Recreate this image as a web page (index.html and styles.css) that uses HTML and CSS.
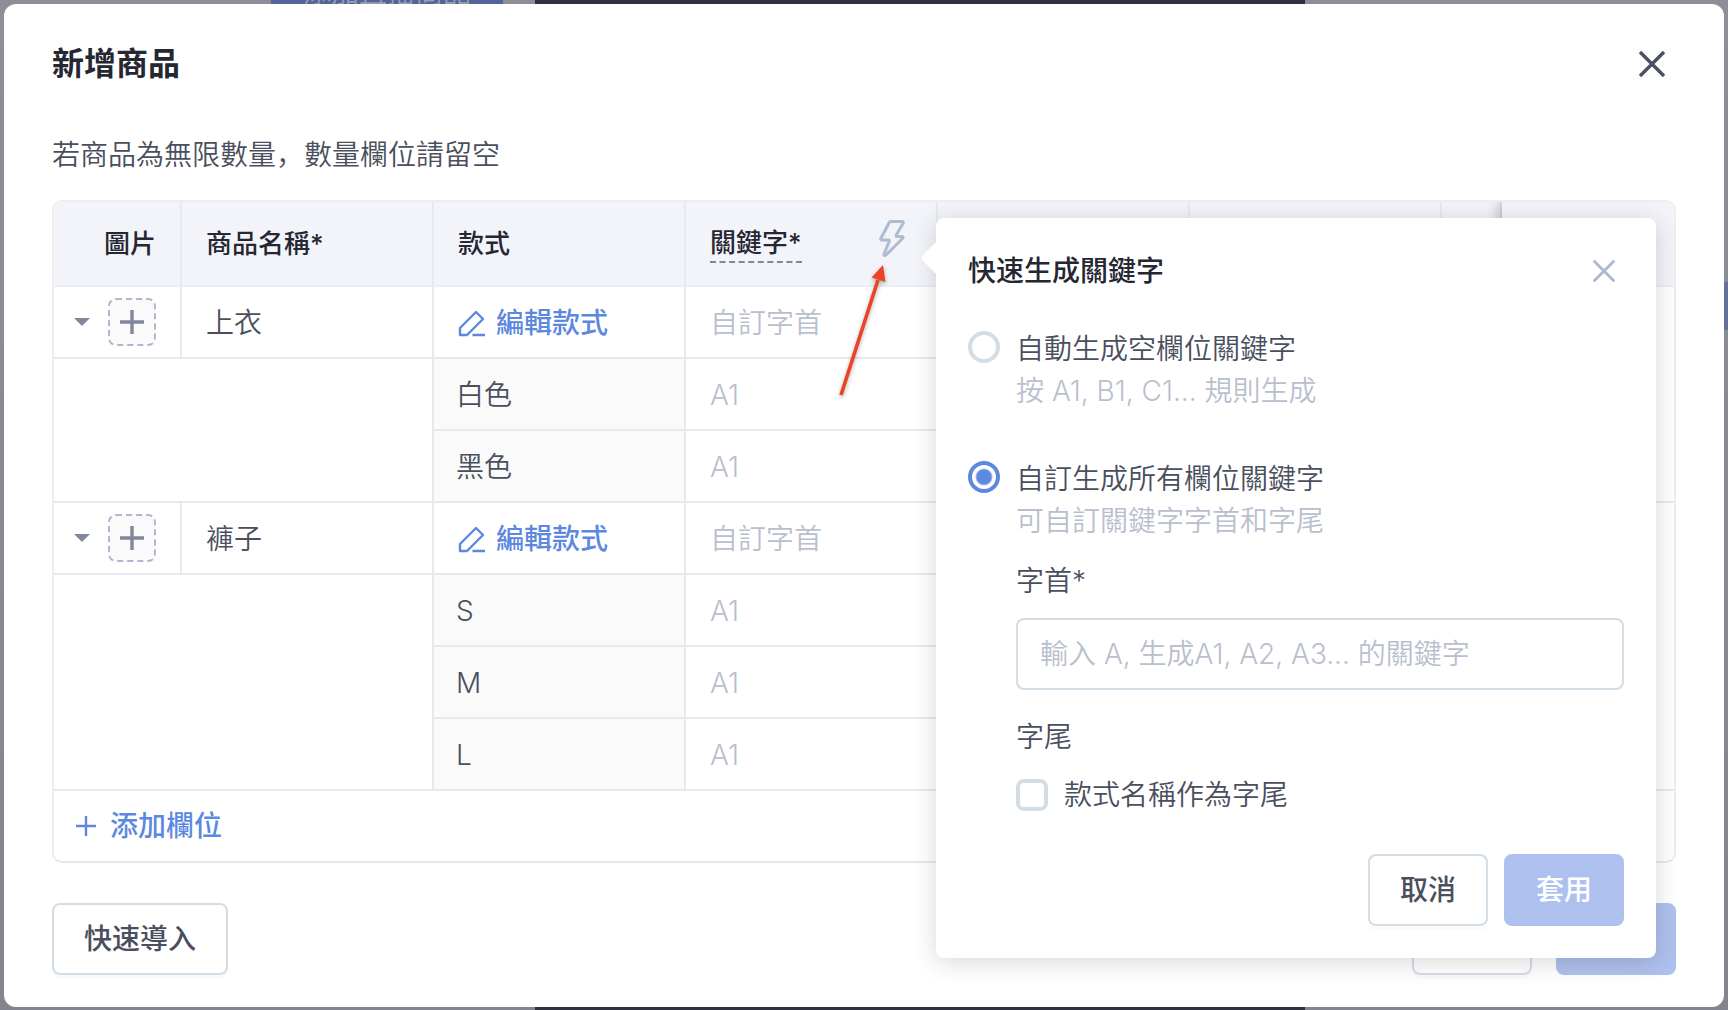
FILE: index.html
```html
<!DOCTYPE html>
<html lang="zh-CN">
<head>
    <meta charset="UTF-8">
    <meta name="viewport" content="width=device-width, initial-scale=1.0">
    <title>新增商品</title>
    <link rel="stylesheet" href="styles.css">
</head>
<body>
    <div class="page-strip"></div>
    <div class="page-button">添加直播商品</div>
    <div class="page-tag"></div>

    <div class="modal" role="dialog" aria-labelledby="modalTitle">
        <header class="modal-header">
            <h1 id="modalTitle">新增商品</h1>
            <button class="icon-button" type="button" aria-label="關閉">
                <svg width="28" height="28" viewBox="0 0 28 28"><path d="M2 2l24 24M26 2L2 26" stroke="#4b5062" stroke-width="3.4" fill="none"/></svg>
            </button>
        </header>
        <p class="note">若商品為無限數量，數量欄位請留空</p>

        <div class="table-box">
            <table>
                <colgroup>
                    <col class="col-image">
                    <col class="col-data">
                    <col class="col-data">
                    <col class="col-data">
                    <col class="col-data">
                    <col class="col-data">
                    <col>
                    <col class="col-action">
                </colgroup>
                <thead>
                    <tr>
                        <th class="image-head">圖片</th>
                        <th>商品名稱*</th>
                        <th>款式</th>
                        <th>
                            <div class="keyword-head">
                                <span class="hint-label">關鍵字*</span>
                                <button class="icon-button bolt" type="button" aria-label="快速生成關鍵字">
                                    <svg width="28" height="40" viewBox="0 0 28 40"><path d="M12.500 3.500H24Q26 3.500 25 5.500L18.500 16.500Q17.500 18.500 19 18.500H24Q26 18.500 24.500 20.500L8 37Q5.500 38.500 6 36L11 24Q12 22 10 22H4Q2 22 3 20L11 5Q11.500 3.500 12.500 3.500Z" stroke="#aebbd0" stroke-width="3" stroke-linejoin="round" fill="none"/></svg>
                                </button>
                            </div>
                        </th>
                        <th></th>
                        <th></th>
                        <th></th>
                        <th class="action"></th>
                    </tr>
                </thead>
                <tbody>
                    <tr>
                        <td class="image-cell">
                            <div class="image-tools">
                                <button class="caret" type="button" aria-label="收合"></button>
                                <button class="upload" type="button" aria-label="上傳圖片">
                                    <svg width="24" height="24" viewBox="0 0 24 24"><path d="M12 0v24M0 12h24" stroke="#80879c" stroke-width="3.400"/></svg>
                                </button>
                            </div>
                        </td>
                        <td class="text">上衣</td>
                        <td class="text"><a class="edit" href="#"><svg width="28" height="28" viewBox="0 0 28 28"><path d="M18 3l7 7L9 26H2v-7zM14.500 26H27" stroke="#5c88e0" stroke-width="2.400" stroke-linejoin="round" fill="none"/></svg>編輯款式</a></td>
                        <td class="text"><input class="cell-input" type="text" placeholder="自訂字首" aria-label="自訂字首"></td>
                        <td></td>
                        <td></td>
                        <td></td>
                        <td class="action" rowspan="3"></td>
                    </tr>
                    <tr>
                        <td colspan="2" rowspan="2"></td>
                        <td class="text variant">白色</td>
                        <td class="text"><input class="cell-input" type="text" placeholder="A1" aria-label="白色關鍵字"></td>
                        <td></td>
                        <td></td>
                        <td></td>
                    </tr>
                    <tr>
                        <td class="text variant">黑色</td>
                        <td class="text"><input class="cell-input" type="text" placeholder="A1" aria-label="黑色關鍵字"></td>
                        <td></td>
                        <td></td>
                        <td></td>
                    </tr>
                    <tr>
                        <td class="image-cell">
                            <div class="image-tools">
                                <button class="caret" type="button" aria-label="收合"></button>
                                <button class="upload" type="button" aria-label="上傳圖片">
                                    <svg width="24" height="24" viewBox="0 0 24 24"><path d="M12 0v24M0 12h24" stroke="#80879c" stroke-width="3.400"/></svg>
                                </button>
                            </div>
                        </td>
                        <td class="text">褲子</td>
                        <td class="text"><a class="edit" href="#"><svg width="28" height="28" viewBox="0 0 28 28"><path d="M18 3l7 7L9 26H2v-7zM14.500 26H27" stroke="#5c88e0" stroke-width="2.400" stroke-linejoin="round" fill="none"/></svg>編輯款式</a></td>
                        <td class="text"><input class="cell-input" type="text" placeholder="自訂字首" aria-label="自訂字首"></td>
                        <td></td>
                        <td></td>
                        <td></td>
                        <td class="action" rowspan="4"></td>
                    </tr>
                    <tr>
                        <td colspan="2" rowspan="3"></td>
                        <td class="text variant">S</td>
                        <td class="text"><input class="cell-input" type="text" placeholder="A1" aria-label="S 關鍵字"></td>
                        <td></td>
                        <td></td>
                        <td></td>
                    </tr>
                    <tr>
                        <td class="text variant">M</td>
                        <td class="text"><input class="cell-input" type="text" placeholder="A1" aria-label="M 關鍵字"></td>
                        <td></td>
                        <td></td>
                        <td></td>
                    </tr>
                    <tr>
                        <td class="text variant">L</td>
                        <td class="text"><input class="cell-input" type="text" placeholder="A1" aria-label="L 關鍵字"></td>
                        <td></td>
                        <td></td>
                        <td></td>
                    </tr>
                </tbody>
            </table>
            <div class="table-footer">
                <button class="add-row" type="button">
                    <svg width="20" height="20" viewBox="0 0 20 20"><path d="M10 0v20M0 10h20" stroke="#5c88e0" stroke-width="2.400"/></svg>
                    添加欄位
                </button>
            </div>
        </div>

        <footer class="modal-footer">
            <button class="button" type="button">快速導入</button>
            <div class="footer-actions">
                <button class="button" type="button" aria-label="取消"></button>
                <button class="button primary" type="button" aria-label="確認"></button>
            </div>
        </footer>

        <form class="popover">
            <div class="popover-header">
                <h2>快速生成關鍵字</h2>
                <button class="icon-button" type="button" aria-label="關閉">
                    <svg width="24" height="24" viewBox="0 0 24 24"><path d="M2.500 2.500l19 19M21.500 2.500l-19 19" stroke="#abb8cd" stroke-width="2.800" stroke-linecap="round" fill="none"/></svg>
                </button>
            </div>

            <label class="option">
                <input type="radio" name="mode">
                <span>自動生成空欄位關鍵字<small>按 A1, B1, C1... 規則生成</small></span>
            </label>
            <label class="option">
                <input type="radio" name="mode" checked>
                <span>自訂生成所有欄位關鍵字<small>可自訂關鍵字字首和字尾</small></span>
            </label>

            <div class="fields">
                <label for="prefix">字首*</label>
                <input type="text" id="prefix" placeholder="輸入 A, 生成A1, A2, A3... 的關鍵字">
                <div class="suffix-title">字尾</div>
                <label class="check"><input type="checkbox">款式名稱作為字尾</label>
            </div>

            <div class="popover-actions">
                <button class="button" type="button">取消</button>
                <button class="button primary" type="submit">套用</button>
            </div>
        </form>

        <svg class="pointer" width="60" height="144" viewBox="0 0 60 144"><path d="M11 135L48 20" stroke="#ec4326" stroke-width="3.600"/><path d="M53 5L41.500 17.500L55.500 22Z" fill="#ec4326"/></svg>
    </div>
</body>
</html>
```
FILE: styles.css
```css
* {
    box-sizing: border-box;
}
body {
    margin: 0;
    padding: 4px 4px 3px;
    min-height: 100vh;
    background: linear-gradient(#8d8e97, #83858e);
    font-family: Inter, "Noto Sans CJK SC", sans-serif;
    font-size: 28px;
    font-weight: 350;
    line-height: 42px;
    color: #4a4f5e;
    display: flex;
    position: relative;
    overflow: hidden;
}
button, input {
    font: inherit;
    color: inherit;
    margin: 0;
}
button {
    padding: 0;
    border: none;
    background: none;
    cursor: pointer;
}
svg {
    display: block;
}

/* page behind the dialog */
.page-strip {
    position: absolute;
    top: 0;
    bottom: 0;
    left: 535px;
    width: 770px;
    background: #31323f;
}
.page-button {
    position: absolute;
    bottom: 100%;
    left: 271px;
    width: 232px;
    margin-bottom: -20px;
    padding-bottom: 6px;
    background: #51659c;
    color: #989cab;
    text-align: center;
}
.page-tag {
    position: absolute;
    top: 282px;
    right: 0;
    width: 8px;
    height: 48px;
    background: #66719a;
}

.modal {
    position: relative;
    flex: 1;
    padding: 36px 48px 32px;
    background: #fff;
    border-radius: 12px;
}
.modal-header {
    display: flex;
    justify-content: space-between;
    align-items: center;
    height: 48px;
    padding-right: 10px;
}
h1 {
    margin: 0;
    font-size: 32px;
    font-weight: 600;
    color: #252733;
}
.note {
    margin: 46px 0 24px;
}

/* table */
.table-box {
    border: 2px solid #eceef4;
    border-bottom-color: #e4e8ed;
    border-radius: 10px;
    overflow: hidden;
}
table {
    width: 100%;
    table-layout: fixed;
    border-collapse: separate;
    border-spacing: 0;
}
.col-image {
    width: 128px;
}
.col-data {
    width: 252px;
}
.col-action {
    width: 172px;
}
th, td {
    padding: 0 24px;
    border-right: 2px solid #e6e9ef;
    border-bottom: 2px solid #e6e9ee;
    text-align: left;
}
th {
    height: 85px;
    background: #f3f4f9;
    font-size: 26px;
    font-weight: 500;
    color: #252733;
    border-bottom-color: #edeef4;
}
td {
    height: 72px;
}
.text {
    padding-top: 2px;
}
.image-head {
    text-align: right;
}
.image-cell {
    padding-left: 20px;
}
.image-tools {
    display: flex;
    align-items: center;
    justify-content: space-between;
}
.caret {
    width: 16px;
    height: 8px;
    background: #80879c;
    clip-path: polygon(0 0, 100% 0, 50% 100%);
}
.upload {
    display: flex;
    align-items: center;
    justify-content: center;
    width: 48px;
    height: 48px;
    background: #fafafa;
    border: 2px dashed #adb8cf;
    border-radius: 8px;
}
.variant {
    padding-left: 22px;
    background: #fafafa;
}
.action {
    border-right: none;
    background: #fff;
}
th.action {
    background: #f3f4f9;
    box-shadow: -4px 0 12px rgba(0, 0, 0, 0.2);
}
.keyword-head {
    display: flex;
    justify-content: space-between;
    align-items: center;
}
.hint-label {
    line-height: 36px;
    border-bottom: 2px dashed #7c889c;
}
.bolt {
    margin: 0 6px 12px 0;
}
.edit {
    display: flex;
    align-items: center;
    gap: 10px;
    color: #5c88e0;
    font-weight: 500;
    text-decoration: none;
}
.cell-input {
    display: block;
    width: 100%;
    padding: 0;
    border: none;
    outline: none;
    background: none;
}
::placeholder {
    color: #b9bfcd;
    opacity: 1;
}
.table-footer {
    height: 70px;
    padding: 0 22px;
    display: flex;
    align-items: center;
}
.add-row {
    display: flex;
    align-items: center;
    gap: 14px;
    color: #5c88e0;
    font-weight: 500;
}

.modal-footer {
    display: flex;
    justify-content: space-between;
    margin-top: 40px;
}
.footer-actions {
    display: flex;
    gap: 24px;
}
.button {
    min-width: 120px;
    height: 72px;
    padding: 0 30px;
    border: 2px solid #d3dde6;
    border-radius: 8px;
    background: #fff;
    box-shadow: 0 4px 0 rgba(0, 0, 0, 0.02);
    font-weight: 500;
}
.primary {
    border-color: #aec1ee;
    background: #aec1ee;
    box-shadow: none;
    color: #fff;
}

/* keyword popover */
.popover {
    position: absolute;
    top: 214px;
    left: 932px;
    width: 720px;
    padding: 32px;
    background: #fff;
    border-radius: 8px;
    box-shadow: 0 4px 24px rgba(0, 0, 0, 0.16);
}
.popover::before {
    content: "";
    position: absolute;
    top: 28px;
    left: -11px;
    width: 24px;
    height: 24px;
    background: #fff;
    border-radius: 4px;
    transform: rotate(45deg);
}
.popover-header {
    display: flex;
    justify-content: space-between;
    align-items: center;
    height: 42px;
    padding-right: 8px;
    margin-bottom: 36px;
}
h2 {
    margin: 0;
    font-size: 28px;
    font-weight: 500;
    color: #252733;
}
.option {
    display: flex;
    gap: 16px;
    margin-bottom: 46px;
}
.option small {
    display: block;
    font-size: 28px;
    color: #b9bfcd;
}
input[type="radio"], input[type="checkbox"] {
    appearance: none;
    flex: none;
    width: 32px;
    height: 32px;
    border: 4px solid #d4dde4;
    background: #fff;
}
input[type="radio"] {
    margin-top: 3px;
    border-radius: 50%;
}
input[type="radio"]:checked {
    border-color: #5c88e0;
    background: radial-gradient(circle, #5c88e0 7px, #fff 9px);
}
input[type="checkbox"] {
    border-radius: 8px;
}
.fields {
    display: flex;
    flex-direction: column;
    margin-top: -28px;
    padding-left: 48px;
}
#prefix {
    height: 72px;
    margin: 16px 0 26px;
    padding: 0 22px;
    border: 2px solid #d3dde6;
    border-radius: 8px;
}
.check {
    display: flex;
    align-items: center;
    gap: 16px;
    margin-top: 16px;
}
.popover-actions {
    display: flex;
    justify-content: flex-end;
    gap: 16px;
    margin-top: 38px;
}

.pointer {
    position: absolute;
    top: 256px;
    left: 826px;
    filter: drop-shadow(0 2px 2px rgba(0, 0, 0, 0.3));
}
```
